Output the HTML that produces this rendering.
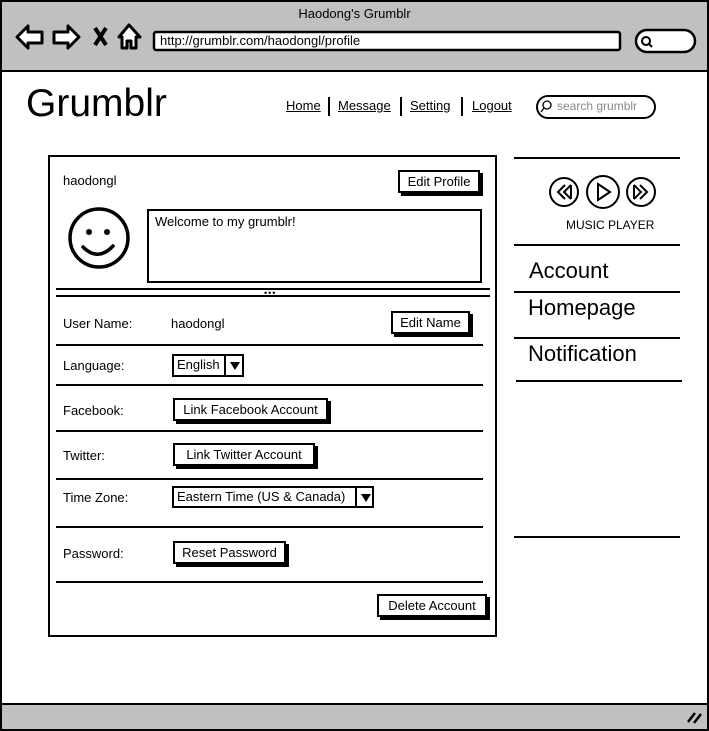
<!DOCTYPE html>
<html><head><meta charset="utf-8"><style>
*{margin:0;padding:0;box-sizing:border-box}
body{width:709px;height:731px;position:relative;overflow:hidden;background:#fff;font-family:"Liberation Sans",sans-serif;color:#000}
.a{position:absolute;white-space:nowrap}
.t{font-size:13px;line-height:15px}
.btn{position:absolute;border:2px solid #000;background:#fff;box-shadow:3px 3px 0 #000;font-size:13px;text-align:center}
.hl{position:absolute;height:2px;background:#000}
.nav{font-size:13px;text-decoration:underline}
.sep{position:absolute;width:2px;height:19px;background:#000;top:97px}
</style></head><body>
<div class="a" style="left:0;top:0;width:709px;height:731px;border:2px solid #000"></div>
<div class="a" style="left:2px;top:2px;width:705px;height:70px;background:#c0c0c0;border-bottom:2px solid #000"></div>
<div class="a" style="left:2px;top:703px;width:705px;height:26px;background:#c0c0c0;border-top:2px solid #000"></div>
<div class="a t" style="left:0;width:709px;text-align:center;top:6px">Haodong's Grumblr</div>
<svg class="a" style="left:0;top:0" width="709" height="731">
<g fill="#fff" stroke="#000" stroke-width="3" stroke-linejoin="round">
<path d="M17 37 L28 26 L28 32 L42 32 L42 43 L28 43 L28 48 Z"/>
<path d="M79 37 L68 26 L68 32 L54 32 L54 43 L68 43 L68 48 Z"/>
<path d="M119 37 L129 25 L140 37 L136 37 L136 48 L131 48 L131 41 L127 41 L127 48 L122 48 L122 37 Z"/>
</g>
<path d="M95 28 L106 45 M106 28 L95 45" stroke="#000" stroke-width="4"/>
<rect x="154" y="32" width="466" height="18" rx="2" fill="#fff" stroke="#000" stroke-width="2.5"/>
<rect x="636" y="30" width="59" height="22" rx="11" fill="#fff" stroke="#000" stroke-width="2.5"/>
<circle cx="646" cy="41" r="4" fill="none" stroke="#000" stroke-width="2"/><path d="M649 44 L652 47" stroke="#000" stroke-width="2"/>
<rect x="537" y="96" width="118" height="22" rx="11" fill="#fff" stroke="#000" stroke-width="2"/>
<circle cx="547" cy="105" r="4" fill="none" stroke="#000" stroke-width="1.3"/><path d="M544 108 L541 112" stroke="#000" stroke-width="1.3"/>
<circle cx="99" cy="238" r="29" fill="none" stroke="#000" stroke-width="3.5"/>
<circle cx="89" cy="232" r="3"/><circle cx="107" cy="232" r="3"/>
<path d="M83 247 Q98 262 113 246" fill="none" stroke="#000" stroke-width="3.5" stroke-linecap="round"/>
<g fill="none" stroke="#000" stroke-width="2">
<circle cx="564" cy="192" r="14"/><circle cx="603" cy="192" r="16"/><circle cx="641" cy="192" r="14"/>
<path d="M598 184 L598 200 L610 192 Z"/>
<path d="M565 185 L558 192 L565 199 M571 185 L564 192 L571 199 M571 185 L571 199"/>
<path d="M640 185 L647 192 L640 199 M634 185 L641 192 L634 199 M634 185 L634 199"/>
</g>
<path d="M688 722 L695 713 M694 723 L701 714" stroke="#000" stroke-width="2.5"/>
</svg>
<div class="a t" style="left:160px;top:33px">http://grumblr.com/haodongl/profile</div>
<div class="a" style="left:26px;top:82px;font-size:39px;line-height:44px">Grumblr</div>
<div class="a nav" style="left:286px;top:98px">Home</div>
<div class="sep" style="left:328px"></div>
<div class="a nav" style="left:338px;top:98px">Message</div>
<div class="sep" style="left:400px"></div>
<div class="a nav" style="left:410px;top:98px">Setting</div>
<div class="sep" style="left:461px"></div>
<div class="a nav" style="left:472px;top:98px">Logout</div>
<div class="a" style="left:557px;top:99px;font-size:12px;color:#888">search grumblr</div>

<div class="a" style="left:48px;top:155px;width:449px;height:482px;border:2px solid #000"></div>
<div class="a t" style="left:63px;top:173px">haodongl</div>
<div class="btn" style="left:398px;top:170px;width:82px;height:23px;line-height:19px">Edit Profile</div>
<div class="a" style="left:147px;top:209px;width:335px;height:74px;border:2px solid #000"></div>
<div class="a t" style="left:155px;top:214px">Welcome to my grumblr!</div>
<div class="hl" style="left:56px;top:288px;width:434px"></div>
<div class="hl" style="left:56px;top:295px;width:434px"></div>
<div class="a" style="left:264px;top:291px;font-size:9px;line-height:4px;letter-spacing:1px">•••</div>

<div class="a t" style="left:63px;top:316px">User Name:</div>
<div class="a t" style="left:171px;top:316px">haodongl</div>
<div class="btn" style="left:391px;top:311px;width:79px;height:23px;line-height:19px">Edit Name</div>
<div class="hl" style="left:56px;top:344px;width:427px"></div>
<div class="a t" style="left:63px;top:358px">Language:</div>
<div class="a" style="left:172px;top:354px;width:72px;height:23px;border:2px solid #000"></div>
<div class="a t" style="left:177px;top:357px">English</div>
<div class="a" style="left:224px;top:354px;width:2px;height:23px;background:#000"></div>
<div class="a" style="left:230px;top:362px;border-left:5px solid transparent;border-right:5px solid transparent;border-top:8px solid #000"></div>
<div class="hl" style="left:56px;top:384px;width:427px"></div>
<div class="a t" style="left:63px;top:403px">Facebook:</div>
<div class="btn" style="left:173px;top:398px;width:155px;height:23px;line-height:19px">Link Facebook Account</div>
<div class="hl" style="left:56px;top:430px;width:427px"></div>
<div class="a t" style="left:63px;top:448px">Twitter:</div>
<div class="btn" style="left:173px;top:443px;width:142px;height:23px;line-height:19px">Link Twitter Account</div>
<div class="hl" style="left:56px;top:478px;width:427px"></div>
<div class="a t" style="left:63px;top:490px">Time Zone:</div>
<div class="a" style="left:172px;top:486px;width:202px;height:22px;border:2px solid #000"></div>
<div class="a t" style="left:177px;top:489px">Eastern Time (US &amp; Canada)</div>
<div class="a" style="left:355px;top:486px;width:2px;height:22px;background:#000"></div>
<div class="a" style="left:361px;top:494px;border-left:5px solid transparent;border-right:5px solid transparent;border-top:8px solid #000"></div>
<div class="hl" style="left:56px;top:526px;width:427px"></div>
<div class="a t" style="left:63px;top:546px">Password:</div>
<div class="btn" style="left:173px;top:541px;width:113px;height:23px;line-height:19px">Reset Password</div>
<div class="hl" style="left:56px;top:581px;width:427px"></div>
<div class="btn" style="left:377px;top:594px;width:110px;height:23px;line-height:19px">Delete Account</div>

<div class="hl" style="left:514px;top:157px;width:166px"></div>
<div class="a" style="left:566px;top:218px;font-size:12px;line-height:14px">MUSIC PLAYER</div>
<div class="hl" style="left:514px;top:244px;width:166px"></div>
<div class="a" style="left:529px;top:257px;font-size:22px;line-height:27px">Account</div>
<div class="hl" style="left:514px;top:291px;width:166px"></div>
<div class="a" style="left:528px;top:294px;font-size:22px;line-height:27px">Homepage</div>
<div class="hl" style="left:514px;top:337px;width:166px"></div>
<div class="a" style="left:528px;top:340px;font-size:22px;line-height:27px">Notification</div>
<div class="hl" style="left:516px;top:380px;width:166px"></div>
<div class="hl" style="left:514px;top:536px;width:166px"></div>
</body></html>
